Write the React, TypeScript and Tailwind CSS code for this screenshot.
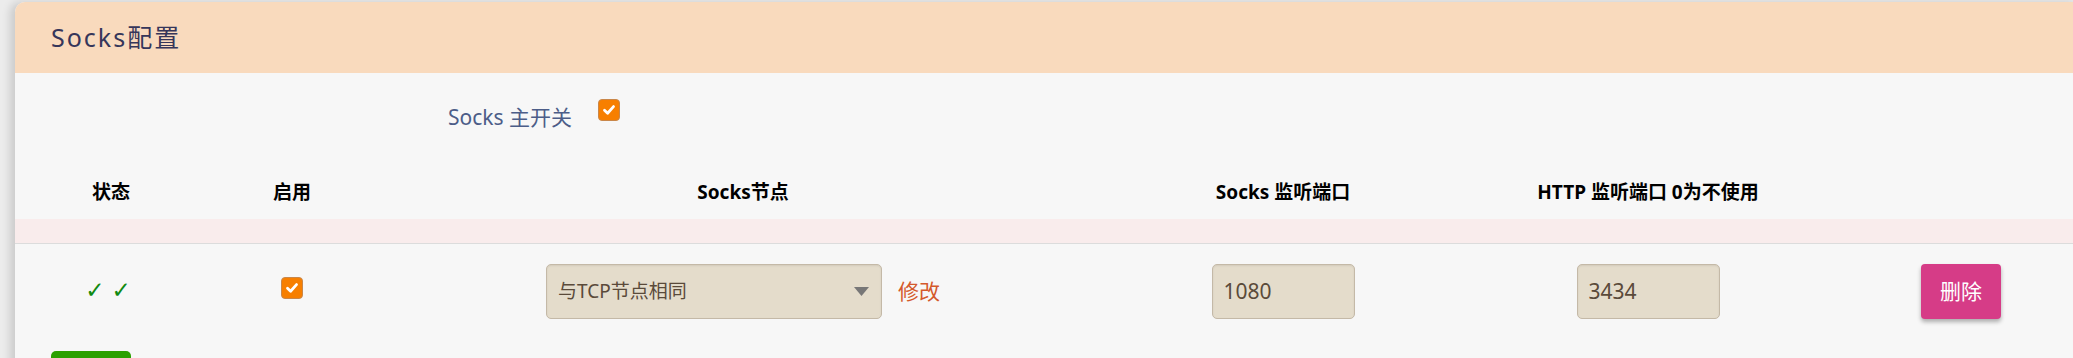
const Checkbox = () => {
  return (
    <div className="w-[22px] h-[22px] rounded-[4px] bg-[#f77f00] border border-[#c9874a] flex items-center justify-center">
      <svg width="14" height="14" viewBox="0 0 14 14">
        <path d="M2.5 7.2 L5.6 10.2 L11.5 3.6" fill="none" stroke="#fff" strokeWidth="2.8" strokeLinecap="round" strokeLinejoin="round" />
      </svg>
    </div>
  );
};

const cols = "grid grid-cols-[192px_170px_732px_348px_382px_1fr]";

const App = () => {
  return (
    <div
      className="w-full h-[358px] overflow-hidden bg-[#ececec]"
      style={{ fontFamily: '"Noto Sans", "Noto Sans CJK SC", sans-serif' }}
    >
      <div className="ml-[15px] mt-[2px] w-[2068px] rounded-t-[10px] overflow-hidden bg-[#f7f7f7] shadow-[-5px_0_9px_rgba(0,0,0,0.14)]">
        {/* header */}
        <div className="h-[71px] bg-[#f9dabd] flex items-center pl-[36px]">
          <h1 className="text-[25px] tracking-[2px] text-[#36365a]">Socks配置</h1>
        </div>

        {/* main switch */}
        <div className="h-[92px] pt-[26px] pl-[433px] flex items-start">
          <span className="mt-[4px] text-[21px] leading-[29px] text-[#4c5d88]">Socks 主开关</span>
          <div className="ml-[26px]">
            <Checkbox />
          </div>
        </div>

        {/* table head */}
        <div className={`${cols} h-[54px] items-center text-[19px] font-bold text-black`}>
          <div className="text-center">状态</div>
          <div className="text-center">启用</div>
          <div className="text-center">Socks节点</div>
          <div className="text-center">Socks 监听端口</div>
          <div className="text-center">HTTP 监听端口 0为不使用</div>
          <div />
        </div>
        <div className="h-[25px] bg-[#f9ecec] border-b border-[#dcdcdc]" />

        {/* row */}
        <div className={`${cols} pt-[20px] pb-[20px] items-center`}>
          <div className="flex justify-center gap-[7px] pr-[6px] mb-[4px] text-[23px] leading-[26px] text-[#118a11]" style={{ fontFamily: '"DejaVu Sans", sans-serif' }}>
            <span>✓</span>
            <span>✓</span>
          </div>
          <div className="flex justify-center mb-[8px]">
            <Checkbox />
          </div>
          <div className="flex justify-center items-center">
            <div className="w-[336px] h-[55px] rounded-[5px] border border-[#c4b9a7] bg-[#e4dccb] flex items-center justify-between pl-[11px] pr-[12px] shadow-[inset_0_1px_2px_rgba(0,0,0,0.08)]">
              <span className="text-[19px] text-[#5a4a3a]">与TCP节点相同</span>
              <svg width="15" height="9" viewBox="0 0 15 9">
                <path d="M0 0 L15 0 L7.5 9 Z" fill="#777" />
              </svg>
            </div>
            <span className="ml-[16px] text-[21px] text-[#d4592b]">修改</span>
          </div>
          <div className="flex justify-center">
            <div className="w-[143px] h-[55px] rounded-[5px] border border-[#c4b9a7] bg-[#e4dccb] flex items-center pl-[11px] text-[21px] text-[#5a4a3a] shadow-[inset_0_1px_2px_rgba(0,0,0,0.08)]">
              1080
            </div>
          </div>
          <div className="flex justify-center">
            <div className="w-[143px] h-[55px] rounded-[5px] border border-[#c4b9a7] bg-[#e4dccb] flex items-center pl-[11px] text-[21px] text-[#5a4a3a] shadow-[inset_0_1px_2px_rgba(0,0,0,0.08)]">
              3434
            </div>
          </div>
          <div className="flex justify-start pl-[82px]">
            <button className="w-[80px] h-[55px] rounded-[4px] bg-[#d63c87] text-white text-[21px] shadow-[0_3px_4px_rgba(0,0,0,0.3)]">
              删除
            </button>
          </div>
        </div>

        {/* add button */}
        <div className="pl-[36px] pt-[12px]">
          <button className="w-[80px] h-[40px] rounded-[5px] bg-[#2ba000]" />
        </div>
      </div>
    </div>
  );
};

export default App;
